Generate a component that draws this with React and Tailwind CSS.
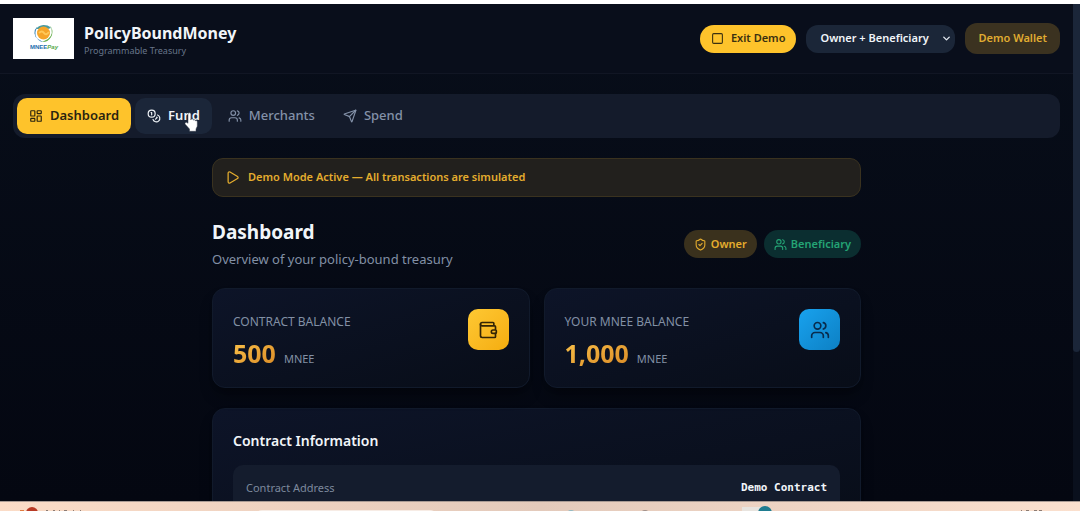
import React from 'react';
import {
  ChevronDown,
  Coins,
  LayoutDashboard,
  Play,
  Send,
  ShieldCheck,
  Square,
  Users,
  Wallet,
} from 'lucide-react';

const tabs = [
  { id: 'dashboard', label: 'Dashboard', icon: LayoutDashboard },
  { id: 'fund', label: 'Fund', icon: Coins },
  { id: 'merchants', label: 'Merchants', icon: Users },
  { id: 'spend', label: 'Spend', icon: Send },
];

const tabStyles = {
  dashboard: 'bg-[#fec32b] text-[#2a2410] font-semibold',
  fund: 'bg-[#1b2639] text-slate-100 font-semibold',
  merchants: 'text-[#8391a8] font-medium',
  spend: 'text-[#8391a8] font-medium',
};

const Logo = () => (
  <svg viewBox="0 0 61 41" className="h-[41px] w-[61px] bg-white" role="img" aria-label="MNEE Pay">
    <path d="M24 9a9 8 0 0 0 1 12l5 3a9 9 0 0 1-6-14z" fill="#2f7fb5" />
    <path d="M37 8a9 9 0 0 1-2 13l-6 3a10 10 0 0 0 9-15z" fill="#63ad49" />
    <path d="M23 11a9 8 0 0 1 15-1l-3 1a8 7 0 0 0-9 0z" fill="#4a9aa0" />
    <circle cx="30.500" cy="15" r="6.500" fill="#f5a52a" />
    <path d="M26 15q3-3 5 0t5-1" fill="none" stroke="#ffc95a" strokeWidth="2" />
    <text x="17" y="31" fontFamily="Liberation Sans, sans-serif" fontSize="6" fontWeight="700" fill="#1f6fae">
      MNEE<tspan fill="#58a84b" fontStyle="italic">Pay</tspan>
    </text>
  </svg>
);

const HandCursor = () => (
  <svg viewBox="0 0 14 20" className="absolute top-[14px] left-[49px] h-5 w-[14px]" aria-hidden="true">
    <path
      d="M4 2.2a1.4 1.4 0 0 1 2.8 0V8l.3-.8a1.2 1.2 0 0 1 2.1.6l.3.3a1.2 1.2 0 0 1 1.9.7 1.2 1.2 0 0 1 1.9 1v4.400L12 17v2.300H5.500V17L1.200 12.300a1.300 1.300 0 0 1 1.800-1.800L4 11.300z"
      fill="#fff"
      stroke="#333a48"
      strokeWidth=".5"
    />
  </svg>
);

const Header = () => (
  <header className="flex h-[70px] items-center justify-between border-b border-[#111624] bg-[#090e1b] px-[13px]">
    <div className="flex items-center gap-[10px]">
      <Logo />
      <div className="pt-1">
        <h1 className="text-[16px] leading-5 font-bold text-slate-100">PolicyBoundMoney</h1>
        <p className="text-[9px] leading-4 text-[#68758a]">Programmable Treasury</p>
      </div>
    </div>
    <div className="flex items-center gap-[10px] text-[11px] font-semibold">
      <button className="flex h-7 items-center gap-[7px] rounded-full bg-[#fec32b] px-[11px] text-[#3a3010]">
        <Square size={13} />
        Exit Demo
      </button>
      <div className="relative">
        <select
          aria-label="Role"
          className="h-7 w-[149px] appearance-none rounded-xl bg-[#1b2638] pl-[14px] text-slate-100"
        >
          <option>Owner + Beneficiary</option>
        </select>
        <ChevronDown
          size={11}
          strokeWidth={3}
          className="pointer-events-none absolute top-2 right-[3px] text-slate-200"
        />
      </div>
      <button className="h-[31px] rounded-xl bg-[#3b3220] px-[13px] text-[#e0ac31]">Demo Wallet</button>
    </div>
  </header>
);

const TabBar = () => (
  <nav className="flex gap-1 rounded-xl bg-[#141b2b] p-1">
    {tabs.map(({ id, label, icon: Icon }) => (
      <button
        key={id}
        className={`relative flex h-9 items-center gap-[7px] rounded-[10px] px-3 text-[13px] ${tabStyles[id]}`}
      >
        <Icon size={14} />
        {label}
        {id === 'fund' && <HandCursor />}
      </button>
    ))}
  </nav>
);

const BalanceCard = ({ title, amount, icon: Icon, iconStyle }) => (
  <div className="flex items-start justify-between rounded-[13px] border border-[#111a2b] bg-linear-to-br from-[#0d1428] to-[#080d18] p-5 shadow-lg shadow-black/30">
    <div className="pt-1">
      <p className="text-[12px] leading-[18px] text-[#8290a5]">{title}</p>
      <p className="mt-2 flex items-baseline gap-2">
        <span className="bg-linear-to-br from-[#fbc34a] to-[#d98a25] bg-clip-text text-[25px] leading-7 font-bold text-transparent">
          {amount}
        </span>
        <span className="text-[11px] leading-4 text-[#8290a5]">MNEE</span>
      </p>
    </div>
    <div className={`flex size-[41px] items-center justify-center rounded-[10px] ${iconStyle}`}>
      <Icon size={20} />
    </div>
  </div>
);

const Dashboard = () => (
  <main className="mx-auto mt-5 w-full max-w-[649px]">
    <div className="flex h-[39px] items-center gap-2 rounded-[11px] border border-[#3a321f] bg-[#22201d] px-3 text-[11px] font-semibold text-[#e5ad2e]">
      <Play size={15} />
      Demo Mode Active — All transactions are simulated
    </div>

    <div className="mt-5 flex items-center justify-between">
      <div>
        <h2 className="text-[19px] leading-[30px] font-bold text-slate-100">Dashboard</h2>
        <p className="text-[13px] leading-6 text-[#8290a5]">Overview of your policy-bound treasury</p>
      </div>
      <div className="flex gap-[7px] text-[11px] font-semibold">
        <span className="flex h-7 items-center gap-1 rounded-full bg-[#3a311d] px-[10px] text-[#e5ad2e]">
          <ShieldCheck size={13} />
          Owner
        </span>
        <span className="flex h-7 items-center gap-1 rounded-full bg-[#0b2e30] px-[10px] text-[#24a475]">
          <Users size={13} />
          Beneficiary
        </span>
      </div>
    </div>

    <div className="mt-[17px] grid grid-cols-2 gap-[14px]">
      <BalanceCard
        title="CONTRACT BALANCE"
        amount="500"
        icon={Wallet}
        iconStyle="bg-linear-to-br from-[#fec832] to-[#f5ad0c] text-[#332505]"
      />
      <BalanceCard
        title="YOUR MNEE BALANCE"
        amount="1,000"
        icon={Users}
        iconStyle="bg-linear-to-br from-[#18a2ee] to-[#0d80c4] text-[#092b4c]"
      />
    </div>

    <section className="mt-5 rounded-[13px] border border-[#111a2b] bg-linear-to-br from-[#0d1428] to-[#080d18] p-5 shadow-lg shadow-black/30">
      <h3 className="text-[14px] leading-6 font-semibold text-slate-100">Contract Information</h3>
      <div className="mt-3 flex h-[46px] items-center justify-between rounded-[10px] bg-[#141c2d] px-[13px]">
        <span className="text-[11px] text-[#7d899d]">Contract Address</span>
        <span className="font-['DejaVu_Sans_Mono',monospace] text-[11px] font-semibold text-slate-100">
          Demo Contract
        </span>
      </div>
    </section>
  </main>
);

const Taskbar = () => (
  <footer className="h-[10px] shrink-0 overflow-hidden border-t border-[#a99b94] bg-linear-to-r from-[#fbdcc7] via-[#e3cabb] to-[#fbe0ce]">
    <svg viewBox="0 0 1080 10" className="h-[10px] w-full" aria-hidden="true">
      <circle cx="32" cy="11" r="6" fill="#b83a25" />
      <rect x="20" y="8" width="4" height="4" fill="#e07a3e" />
      <path d="M46 9h2M53 9h2M59 9h1M64 9h3M73 9h1M80 9h1" stroke="#8d7c73" strokeWidth="2" />
      <rect x="255" y="8" width="182" height="14" rx="7" fill="#f7ece5" />
      <circle cx="571" cy="12" r="4" fill="#8fb9c2" />
      <circle cx="645" cy="12" r="4" fill="#a08f89" />
      <rect x="742" y="5" width="22" height="8" fill="#e8e4df" />
      <circle cx="765" cy="11" r="7" fill="#1f7c90" />
      <path d="M1021 9h1M1026 9h3M1034 9h3M1039 9h3" stroke="#8d7c73" strokeWidth="2" />
    </svg>
  </footer>
);

const App = () => (
  <div className="flex h-screen flex-col overflow-hidden border-t-4 border-white bg-[#080d18] font-['Noto_Sans','Open_Sans',sans-serif]">
    <div className="flex min-h-0 flex-1 overflow-hidden">
      <div className="min-w-0 flex-1 overflow-hidden bg-linear-to-b from-[#080e1a] to-[#040711]">
        <Header />
        <div className="px-[13px] pt-5">
          <TabBar />
          <Dashboard />
        </div>
      </div>
      <div className="w-[7px] shrink-0 bg-[#0a101d]">
        <div className="h-[70%] rounded-b-full bg-[#1b2639]" />
      </div>
    </div>
    <Taskbar />
  </div>
);

export default App;
